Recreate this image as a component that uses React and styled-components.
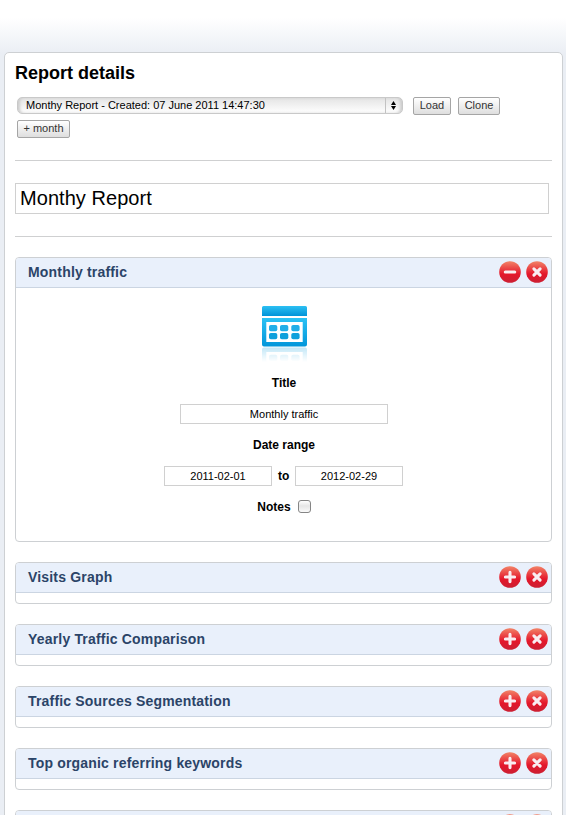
import React from "react";
import styled, { createGlobalStyle } from "styled-components";

const GlobalStyle = createGlobalStyle`
  * { box-sizing: border-box; }
  body {
    margin: 0;
    background: #fff;
    color: #000;
    font-family: "Liberation Sans", Arial, Helvetica, sans-serif;
  }
`;

const Page = styled.div`
  height: 815px;
  overflow: hidden;
  padding: 52px 3px 0 4px;
  background: linear-gradient(#fff 0, #fff 18px, #eaeef4 54px, #eaeef4 100%);
`;

const Panel = styled.main`
  min-height: 800px;
  padding: 0 10px;
  border: 1px solid #cdd0d3;
  border-radius: 5px;
  background: #fff;
`;

const Heading = styled.h1`
  margin: 0;
  padding-top: 9px;
  height: 44px;
  font-size: 18px;
  line-height: 22px;
`;

const Toolbar = styled.div`
  display: flex;
  flex-wrap: wrap;
  align-items: flex-start;
  gap: 5px 7px;
  height: 41px;
  margin-left: 2px;
`;

const Select = styled.div`
  display: flex;
  justify-content: space-between;
  width: 386px;
  height: 17px;
  margin-right: 3px;
  padding-left: 8px;
  border: 1px solid #c9c9c9;
  border-radius: 5px;
  background: linear-gradient(#e4e4e4, #fff);
  box-shadow: inset 3px 0 3px -1px #ccc, inset -3px 0 3px -1px #ccc;
  font-size: 11px;
  line-height: 15px;
  white-space: nowrap;
`;

const Stepper = styled.span`
  display: flex;
  align-items: center;
  width: 17px;
  padding-left: 5px;
  border-left: 1px solid #c2c2c2;
`;

const ToolButton = styled.button`
  width: ${(p) => p.$width}px;
  height: 18px;
  padding: 0 0 2px;
  border: 1px solid #a5a5a5;
  border-radius: 2px;
  background: linear-gradient(#fff, #dedede);
  color: #333;
  font: 11px/14px "Liberation Sans", Arial, sans-serif;
  white-space: nowrap;
`;

const Rule = styled.hr`
  height: 1px;
  margin: 22px 0;
  border: 0;
  background: #cfd0d1;
`;

const NameInput = styled.input`
  display: block;
  width: 534px;
  height: 31px;
  padding: 0 4px 1px;
  border: 1px solid #d0d0d0;
  background: #fff;
  color: #000;
  font: 20px "Liberation Sans", Arial, sans-serif;
  letter-spacing: 0.05px;
`;

const Sections = styled.div`
  display: flex;
  flex-direction: column;
  gap: 20px;
  margin-top: -2px;
`;

const Card = styled.section`
  height: ${(p) => (p.$open ? 285 : 42)}px;
  flex: none;
  border: 1px solid #cdd0d3;
  border-radius: 4px;
  overflow: hidden;
`;

const CardHeader = styled.header`
  display: flex;
  align-items: center;
  gap: 5px;
  height: 30px;
  padding: 0 3px 1px 12px;
  border-bottom: 1px solid #cbd5e2;
  background: #e9f0fb;
`;

const CardTitle = styled.h2`
  flex: 1;
  margin: 0;
  color: #2b4468;
  font-size: 14px;
  line-height: 18px;
  letter-spacing: 0.18px;
`;

const IconButton = styled.button`
  display: block;
  width: 22px;
  height: 22px;
  padding: 0;
  border: 0;
  background: none;
  svg { display: block; }
`;

const CardBody = styled.div`
  display: flex;
  flex-direction: column;
  align-items: center;
  padding-top: 18px;
  padding-left: 1px;
  font-size: 12px;
  font-weight: bold;
`;

const FieldLabel = styled.label`
  height: 14px;
  line-height: 14px;
  margin-top: ${(p) => p.$top}px;
`;

const FieldInput = styled.input`
  width: ${(p) => p.$width}px;
  height: 20px;
  padding: 0;
  border: 1px solid #d0d0d0;
  color: #000;
  text-align: center;
  font: 11px "Liberation Sans", Arial, sans-serif;
`;

const FieldRow = styled.div`
  display: flex;
  align-items: center;
  justify-content: center;
  gap: 6px;
  margin-top: 14px;
`;

const DateRow = styled(FieldRow)`
  padding-right: 1px;
`;

const Joiner = styled.span`
  width: 11px;
  white-space: nowrap;
`;

const Notes = styled(FieldRow)`
  gap: 7px;
  height: 14px;
`;

const Check = styled.input`
  appearance: none;
  width: 13px;
  height: 13px;
  margin: 0 0 2px;
  border: 1px solid #858585;
  border-radius: 3px;
  background: linear-gradient(#fff, #e6e6e6 45%, #fafafa);
`;

const glyphs = {
  minus: <path d="M6.3 11h9.4" />,
  plus: <path d="M6.4 11h9.2M11 6.4v9.2" />,
  close: <path d="M7.9 7.9l6.2 6.2M14.1 7.9l-6.2 6.2" />,
};

function RoundIcon({ kind, label }) {
  return (
    <IconButton aria-label={label}>
      <svg width="22" height="22" viewBox="0 0 22 22">
        <defs>
          <linearGradient id="red" x1="0" y1="0" x2="0" y2="1">
            <stop offset="0" stopColor="#f28468" />
            <stop offset=".45" stopColor="#e8303a" />
            <stop offset=".6" stopColor="#e4172b" />
            <stop offset="1" stopColor="#cb2033" />
          </linearGradient>
        </defs>
        <circle cx="11" cy="11" r="10.8" fill="url(#red)" />
        <g stroke="#f9edf1" strokeWidth="3.1" strokeLinecap="round">{glyphs[kind]}</g>
      </svg>
    </IconButton>
  );
}

function CalendarShape() {
  return (
    <>
      <path d="M1.5 0h42a1.5 1.5 0 0 1 1.5 1.5V10H0V1.5A1.5 1.5 0 0 1 1.5 0z" fill="url(#calTop)" />
      <path
        fillRule="evenodd"
        d="M0 12h45v26.5a2 2 0 0 1-2 2H2a2 2 0 0 1-2-2zM4.3 16v20h36.4V16z"
        fill="url(#calBody)"
      />
      {[19, 27].map((y) =>
        [7, 18, 29.3].map((x) => (
          <rect key={`${x}-${y}`} x={x} y={y} width="8.3" height="6.3" rx="1.8" fill={y === 19 ? "#20aee8" : "#0fa0dc"} />
        ))
      )}
    </>
  );
}

function CalendarIcon() {
  return (
    <svg width="46" height="60" viewBox="-1 0 46 60" aria-hidden="true">
      <defs>
        <linearGradient id="calTop" x1="0" y1="0" x2="0" y2="1">
          <stop offset="0" stopColor="#2cc0f3" />
          <stop offset="1" stopColor="#0093d8" />
        </linearGradient>
        <linearGradient id="calBody" x1="0" y1="0" x2="0" y2="1">
          <stop offset="0" stopColor="#2cc2f4" />
          <stop offset="1" stopColor="#0095da" />
        </linearGradient>
        <linearGradient id="fade" gradientUnits="userSpaceOnUse" x1="0" y1="41" x2="0" y2="56">
          <stop offset="0" stopColor="#fff" stopOpacity=".25" />
          <stop offset="1" stopColor="#fff" stopOpacity="0" />
        </linearGradient>
        <mask id="fadeMask" maskUnits="userSpaceOnUse" x="0" y="41" width="45" height="19">
          <rect y="41" width="45" height="19" fill="url(#fade)" />
        </mask>
      </defs>
      <CalendarShape />
      <g mask="url(#fadeMask)">
        <g transform="matrix(1 0 0 -1 0 82)">
          <CalendarShape />
        </g>
      </g>
    </svg>
  );
}

const sections = [
  "Visits Graph",
  "Yearly Traffic Comparison",
  "Traffic Sources Segmentation",
  "Top organic referring keywords",
  "",
];

function SectionCard({ title, open, children }) {
  return (
    <Card $open={open}>
      <CardHeader>
        <CardTitle>{title}</CardTitle>
        <RoundIcon kind={open ? "minus" : "plus"} label={open ? "Collapse" : "Expand"} />
        <RoundIcon kind="close" label="Remove" />
      </CardHeader>
      {children}
    </Card>
  );
}

export default function App() {
  return (
    <>
      <GlobalStyle />
      <Page>
        <Panel>
          <Heading>Report details</Heading>
          <Toolbar>
            <Select>
              Monthy Report - Created: 07 June 2011 14:47:30
              <Stepper>
                <svg width="5" height="9" viewBox="0 0 5 9">
                  <path d="M2.5 0L5 4H0zM0 5h5L2.5 9z" />
                </svg>
              </Stepper>
            </Select>
            <ToolButton $width={38}>Load</ToolButton>
            <ToolButton $width={42}>Clone</ToolButton>
            <ToolButton $width={53}>+ month</ToolButton>
          </Toolbar>
          <Rule />
          <NameInput defaultValue="Monthy Report" aria-label="Report name" />
          <Rule />
          <Sections>
            <SectionCard title="Monthly traffic" open>
              <CardBody>
                <CalendarIcon />
                <FieldLabel $top={10}>Title</FieldLabel>
                <FieldRow>
                  <FieldInput $width={208} defaultValue="Monthly traffic" />
                </FieldRow>
                <FieldLabel $top={14}>Date range</FieldLabel>
                <DateRow>
                  <FieldInput $width={108} defaultValue="2011-02-01" />
                  <Joiner>to</Joiner>
                  <FieldInput $width={108} defaultValue="2012-02-29" />
                </DateRow>
                <Notes>
                  Notes
                  <Check type="checkbox" />
                </Notes>
              </CardBody>
            </SectionCard>
            {sections.map((title, i) => (
              <SectionCard key={i} title={title} />
            ))}
          </Sections>
        </Panel>
      </Page>
    </>
  );
}
